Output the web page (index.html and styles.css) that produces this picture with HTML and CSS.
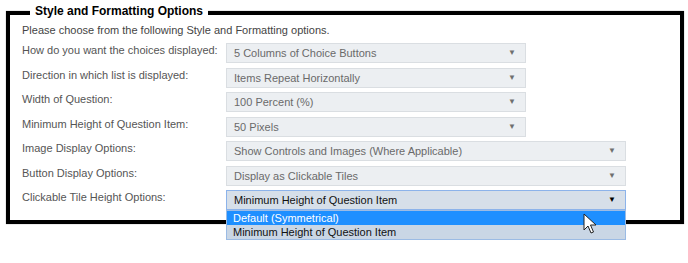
FILE: index.html
```html
<!DOCTYPE html>
<html lang="en">
<head>
    <meta charset="UTF-8">
    <title>Style and Formatting Options</title>
    <link rel="stylesheet" href="styles.css">
</head>
<body>
    <div class="options">
        <div class="options-title">Style and Formatting Options</div>
        <p class="intro">Please choose from the following Style and Formatting options.</p>

        <div class="rows">
            <div class="row">
                <label>How do you want the choices displayed:</label>
                <div class="select short">5 Columns of Choice Buttons<span class="arrow">&#9660;</span></div>
            </div>
            <div class="row">
                <label>Direction in which list is displayed:</label>
                <div class="select short">Items Repeat Horizontally<span class="arrow">&#9660;</span></div>
            </div>
            <div class="row">
                <label>Width of Question:</label>
                <div class="select short">100 Percent (%)<span class="arrow">&#9660;</span></div>
            </div>
            <div class="row">
                <label>Minimum Height of Question Item:</label>
                <div class="select short">50 Pixels<span class="arrow">&#9660;</span></div>
            </div>
            <div class="row">
                <label>Image Display Options:</label>
                <div class="select">Show Controls and Images (Where Applicable)<span class="arrow">&#9660;</span></div>
            </div>
            <div class="row">
                <label>Button Display Options:</label>
                <div class="select">Display as Clickable Tiles<span class="arrow">&#9660;</span></div>
            </div>
            <div class="row">
                <label>Clickable Tile Height Options:</label>
                <div class="select open">Minimum Height of Question Item<span class="arrow">&#9660;</span>
                    <ul class="dropdown">
                        <li class="active">Default (Symmetrical)</li>
                        <li>Minimum Height of Question Item</li>
                    </ul>
                    <svg class="cursor" width="14" height="22" viewBox="0 0 14 22">
                        <path d="M1 1 L1 17 L5 13 L8 20 L10.5 19 L7.5 12 L13 12 Z" fill="#fff" stroke="#222" stroke-width="1" stroke-linejoin="round"/>
                    </svg>
                </div>
            </div>
        </div>
    </div>
</body>
</html>
```

FILE: styles.css
```css
html, body { min-height: 263px; }
body { margin: 0; font-family: "Liberation Sans", Arial, sans-serif; font-size: 11px; background: #fff; }
.options { position: relative; box-sizing: border-box; margin: 11px 4px 0 6px; width: 678px; padding: 9px 12px 10px 12px; border: 4px solid #000; box-shadow: 0 0 1px #888; }
.options-title { position: absolute; left: 20px; top: -11px; padding: 0 5px; background: #fff; font-weight: bold; font-size: 12px; line-height: 14px; color: #000; }
.intro { margin: 0 0 6px 0; color: #444; line-height: 13px; }
.rows { display: flex; flex-direction: column; gap: 4.5px; }
.row { display: flex; align-items: flex-start; }
.row label { width: 204px; padding-top: 1px; color: #555; line-height: 13px; }
.select { position: relative; box-sizing: border-box; width: 400px; height: 20px; padding: 0 0 0 7px; line-height: 18px; background: #eceff2; border: 1px solid #dadee2; color: #6a6a6a; }
.select.short { width: 300px; }
.arrow { position: absolute; right: 9px; top: 0; font-size: 8px; color: #6f6f6f; }
.select.open { z-index: 1; background: #d6dfe9; border-color: #8cb3ea; color: #111; }
.select.open .arrow { color: #000; }
.dropdown { position: absolute; left: -1px; top: 19px; width: 400px; margin: 0; padding: 0; list-style: none; background: #c9d6e5; border: 1px solid #9bbbe4; box-sizing: border-box; }
.dropdown li { height: 14px; line-height: 14px; padding-left: 6px; color: #111; }
.dropdown li.active { background: #1e8fff; color: #fff; }
.cursor { position: absolute; left: 356px; top: 22px; }
```
